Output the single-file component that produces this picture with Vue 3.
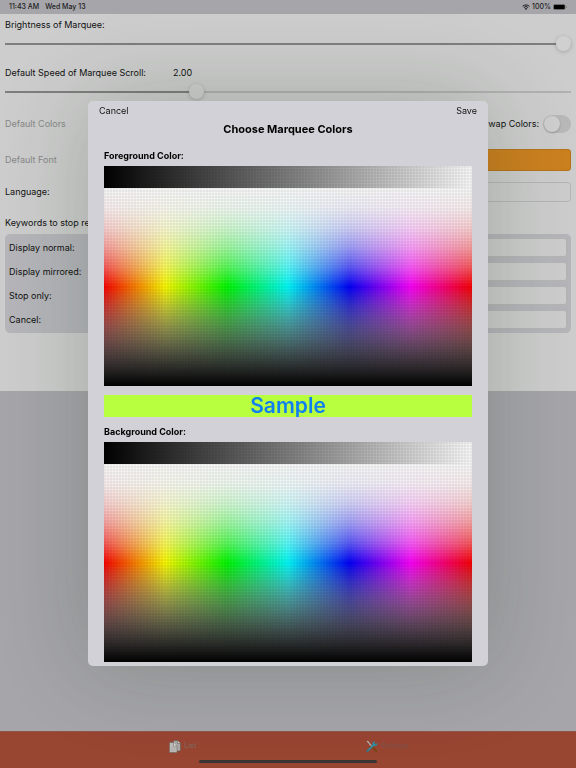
<script setup>
import { reactive, ref } from 'vue'

const brightness = ref(1)
const speed = ref(2)
const swapColors = ref(false)
const language = ref('')

const keywords = reactive([
    { id: 'normal', label: 'Display normal:', value: '' },
    { id: 'mirrored', label: 'Display mirrored:', value: '' },
    { id: 'stop', label: 'Stop only:', value: '' },
    { id: 'cancel', label: 'Cancel:', value: '' }
])

const isOpen = ref(true)
const colors = reactive({
    foreground: '#1080f0',
    background: '#b8ff40'
})

function pickGray(event, key) {
    const x = event.offsetX / event.currentTarget.clientWidth
    const v = Math.round(x * 255)
    colors[key] = `rgb(${v}, ${v}, ${v})`
}

function pickColor(event, key) {
    const x = event.offsetX / event.currentTarget.clientWidth
    const y = event.offsetY / event.currentTarget.clientHeight
    const top = y < 0.5
    const saturation = top ? Math.pow(2 * y, 2) : Math.pow(2 * (1 - y), 1.3)
    const value = top ? 1 : 2 * (1 - y)

    // hsv -> rgb
    const channel = (n) => {
        const k = (n + x * 6) % 6
        const c = value - value * saturation * Math.max(0, Math.min(k, 4 - k, 1))
        return Math.round(c * 255)
    }
    colors[key] = `rgb(${channel(5)}, ${channel(3)}, ${channel(1)})`
}

function close() {
    isOpen.value = false
}
</script>

<template>
    <div class="screen">
        <header class="status">
            <span>11:43 AM</span>
            <span class="status__date">Wed May 13</span>
            <svg class="status__wifi" viewBox="0 0 16 12" aria-hidden="true">
                <path d="M1.2 4.6a9.8 9.8 0 0 1 13.6 0M3.6 7.1a6.3 6.3 0 0 1 8.8 0" fill="none" stroke="#1c1c1e" stroke-width="2" />
                <path d="M8 12 5.4 9.2a3.8 3.8 0 0 1 5.2 0Z" fill="#1c1c1e" />
            </svg>
            <span>100%</span>
            <svg class="status__battery" viewBox="0 0 28 12" aria-hidden="true">
                <rect x="0.5" y="0.5" width="24" height="11" rx="3" fill="none" stroke="#6d6c70" />
                <rect x="1.5" y="1.5" width="22" height="9" rx="2" fill="#000" />
                <path d="M26 4v4q1.6-.5 1.6-2T26 4" fill="#6d6c70" />
            </svg>
        </header>

        <main class="settings">
            <label class="settings__line" for="brightness">Brightness of Marquee:</label>
            <input id="brightness" v-model.number="brightness" class="slider" type="range" min="0" max="1" step="0.01" :style="{ '--fill': brightness * 100 + '%' }">

            <div class="settings__line settings__line_speed">
                <label for="speed">Default Speed of Marquee Scroll:</label>
                <output for="speed">{{ speed.toFixed(2) }}</output>
            </div>
            <input id="speed" v-model.number="speed" class="slider" type="range" min="0" max="6" step="0.01" :style="{ '--fill': speed / 6 * 100 + '%' }">

            <div class="row row_colors">
                <button class="link" disabled>Default Colors</button>
                <label class="row__swap" for="swap">Swap Colors:</label>
                <input id="swap" v-model="swapColors" class="switch" type="checkbox">
            </div>

            <div class="row row_font">
                <button class="link" disabled>Default Font</button>
                <button class="font-button" aria-label="Choose font"></button>
            </div>

            <div class="row row_language">
                <label class="row__label" for="language">Language:</label>
                <input id="language" v-model="language" class="field" type="text">
            </div>

            <p class="settings__caption">Keywords to stop recording:</p>
            <div class="group">
                <div v-for="item in keywords" :key="item.id" class="group__row">
                    <label class="row__label" :for="item.id">{{ item.label }}</label>
                    <input :id="item.id" v-model="item.value" class="field" type="text">
                </div>
            </div>
        </main>

        <nav class="tabs">
            <div class="tabs__list">
                <a class="tab" href="#list">
                    <svg class="tab__icon" viewBox="0 0 24 26" aria-hidden="true">
                        <path d="M9 1h8l6 6v15H9Z" fill="#a9a8a5" stroke="#5f504b" />
                        <path d="M17 1v6h6" fill="#d0cecb" stroke="#5f504b" />
                        <path d="M1 5h8l7 7v13H1Z" fill="#bcbab7" stroke="#6d625e" />
                        <path d="M9 5v7h7" fill="#dddbd8" stroke="#6d625e" />
                        <path d="M4 15h9M4 18h9M4 21h9" stroke="#a8a4a0" />
                    </svg>
                    <span>List</span>
                </a>
                <a class="tab tab_active" href="#settings">
                    <svg class="tab__icon" viewBox="0 0 26 26" aria-hidden="true">
                        <path d="m2 2 3 1 3 5 7 7" fill="none" stroke="#b5b8b8" stroke-width="2.6" />
                        <path d="m16 16 6 7" stroke="#7c4716" stroke-width="5" stroke-linecap="round" />
                        <path d="M3 23 17 9" stroke="#26798b" stroke-width="4.4" stroke-linecap="round" />
                        <path d="M20 1q-7 1-6 8 2 4 7 3 4-1 4-7l-4 3-3-3Z" fill="#2c8ca0" />
                        <path d="M4 22 17 9" stroke="#54acbc" stroke-width="1.4" />
                    </svg>
                    <span>Settings</span>
                </a>
            </div>
            <div class="tabs__home"></div>
        </nav>

        <div v-if="isOpen" class="overlay">
            <section class="modal" role="dialog" aria-labelledby="modal-title">
                <div class="modal__bar">
                    <button class="modal__button" @click="close">Cancel</button>
                    <button class="modal__button" @click="close">Save</button>
                </div>
                <h1 id="modal-title" class="modal__title">Choose Marquee Colors</h1>

                <h2 class="modal__label">Foreground Color:</h2>
                <div class="palette">
                    <div class="palette__gray" @click="pickGray($event, 'foreground')"></div>
                    <div class="palette__hue" @click="pickColor($event, 'foreground')"></div>
                </div>

                <p class="sample" :style="{ color: colors.foreground, backgroundColor: colors.background }">Sample</p>

                <h2 class="modal__label">Background Color:</h2>
                <div class="palette">
                    <div class="palette__gray" @click="pickGray($event, 'background')"></div>
                    <div class="palette__hue" @click="pickColor($event, 'background')"></div>
                </div>
            </section>
        </div>
    </div>
</template>

<style>
body {
    margin: 0;
}
</style>

<style scoped>
* {
    box-sizing: border-box;
}

.screen {
    display: flex;
    flex-direction: column;
    min-height: 100vh;
    background: #a6a5aa;
    color: #111;
    font: 9px/12px Inter, "Liberation Sans", sans-serif;
}

button {
    margin: 0;
    padding: 0;
    border: none;
    background: none;
    color: inherit;
    font: inherit;
}

.status {
    display: flex;
    align-items: center;
    height: 14px;
    padding: 0 9px;
    color: #1c1c1e;
    font-size: 7px;
    font-weight: 500;
}

.status__date {
    margin-left: 6px;
    margin-right: auto;
}

.status__wifi {
    width: 8px;
    height: 6px;
    margin-right: 2px;
}

.status__battery {
    width: 14px;
    height: 6px;
    margin-left: 2px;
}

.settings {
    display: flex;
    flex-direction: column;
    padding: 5px 5px 58px;
    background: #cdcdcd;
}

.settings__line {
    display: flex;
    gap: 27px;
}

.settings__line_speed {
    margin-top: 16px;
}

.slider {
    appearance: none;
    width: 100%;
    height: 15px;
    margin: 5px 0 0;
    border-radius: 1px;
    background: linear-gradient(to right, #7e7e7e var(--fill), #b1b1b1 var(--fill)) center / 100% 2px no-repeat;
}

.slider::-webkit-slider-thumb {
    appearance: none;
    width: 15px;
    height: 15px;
    border-radius: 50%;
    background: #d0d0d0;
    box-shadow: 0 1px 4px rgba(0, 0, 0, 0.2);
}

.row {
    display: flex;
    align-items: center;
}

.row_colors {
    height: 18px;
    margin-top: 16px;
}

.row_font {
    height: 22px;
    margin-top: 16px;
}

.row_language {
    height: 20px;
    margin-top: 11px;
}

.row__label {
    width: 100px;
}

.row__swap {
    margin-left: auto;
}

.link {
    color: #888;
}

.switch {
    appearance: none;
    display: flex;
    width: 28px;
    height: 18px;
    margin: 0 0 0 4px;
    padding: 1px;
    border-radius: 9px;
    background: #b8b8b8;
}

.switch::before {
    content: "";
    width: 16px;
    height: 16px;
    border-radius: 50%;
    background: #cfcfcf;
    box-shadow: 0 1px 2px rgba(0, 0, 0, 0.2);
}

.switch:checked {
    justify-content: flex-end;
    background: #2a9d46;
}

.font-button {
    flex: 1;
    height: 22px;
    margin-left: 45px;
    border: 1px solid #b4741c;
    border-radius: 3px;
    background: #cc8020;
}

.field {
    flex: 1;
    min-width: 0;
    height: 100%;
    padding: 0 4px;
    border: 1px solid #b5b5b6;
    border-radius: 3px;
    background: #cdcdcd;
    color: inherit;
    font: inherit;
    outline: none;
}

.settings__caption {
    margin: 15px 0 5px;
}

.group {
    display: flex;
    flex-direction: column;
    gap: 5px;
    padding: 4px;
    border-radius: 5px;
    background: #b5b5ba;
}

.group__row {
    display: flex;
    align-items: center;
    height: 19px;
}

.tabs {
    margin-top: auto;
    padding-bottom: 5px;
    border-top: 1px solid #8f5549;
    background: #984532;
}

.tabs__list {
    display: flex;
    padding: 0 15% 0 14%;
}

.tab {
    display: flex;
    flex: 1;
    align-items: center;
    justify-content: center;
    gap: 3px;
    height: 28px;
    color: #876257;
    font-size: 7px;
    font-weight: 600;
    text-decoration: none;
}

.tab_active {
    color: #865045;
}

.tab__icon {
    width: 12px;
    height: 13px;
}

.tabs__home {
    width: 31%;
    height: 3px;
    margin: 0 auto;
    border-radius: 2px;
    background: #3b3533;
}

.overlay {
    position: fixed;
    inset: 0;
    display: flex;
    align-items: center;
    justify-content: center;
    padding-bottom: 1px;
}

.modal {
    width: 100%;
    max-width: 400px;
    padding: 0 16px 4px;
    border-radius: 5px;
    background: #d2d1d7;
    box-shadow: 0 0 90px rgba(20, 50, 20, 0.24);
}

.modal__bar {
    display: flex;
    align-items: center;
    justify-content: space-between;
    height: 19px;
    margin: 0 -5px;
}

.modal__title {
    margin: 0 0 12px;
    color: #000;
    font-size: 11px;
    line-height: 18px;
    font-weight: 700;
    text-align: center;
}

.modal__label {
    margin: 0 0 4px;
    color: #000;
    font-size: 9px;
    line-height: 12px;
    font-weight: 700;
}

.palette {
    position: relative;
}

/* thin cell grid over both parts of the palette */
.palette::after {
    content: "";
    position: absolute;
    inset: 0;
    background:
        repeating-linear-gradient(to right, rgba(0, 0, 0, 0.05) 0 2px, rgba(0, 0, 0, 0.01) 2px 3px),
        repeating-linear-gradient(to bottom, rgba(0, 0, 0, 0.05) 0 2px, rgba(0, 0, 0, 0.01) 2px 3px);
    pointer-events: none;
}

.palette__gray {
    height: 22px;
    background: linear-gradient(to right, #000, #fff);
}

.palette__hue {
    height: 198px;
    background:
        linear-gradient(to bottom, transparent 50%, #000),
        linear-gradient(
            to bottom,
            #fff,
            rgba(255, 255, 255, 0.96) 10%,
            rgba(255, 255, 255, 0.84) 20%,
            rgba(255, 255, 255, 0.64) 30%,
            rgba(255, 255, 255, 0.36) 40%,
            rgba(255, 255, 255, 0) 50%,
            rgba(255, 255, 255, 0.25) 60%,
            rgba(255, 255, 255, 0.49) 70%,
            rgba(255, 255, 255, 0.7) 80%,
            rgba(255, 255, 255, 0.88) 90%,
            #fff
        ),
        linear-gradient(to right, #f00, #ff0, #0f0, #0ff, #00f, #f0f, #f00);
}

.sample {
    margin: 9px 0;
    font-size: 21px;
    line-height: 22px;
    font-weight: 600;
    text-align: center;
}
</style>
